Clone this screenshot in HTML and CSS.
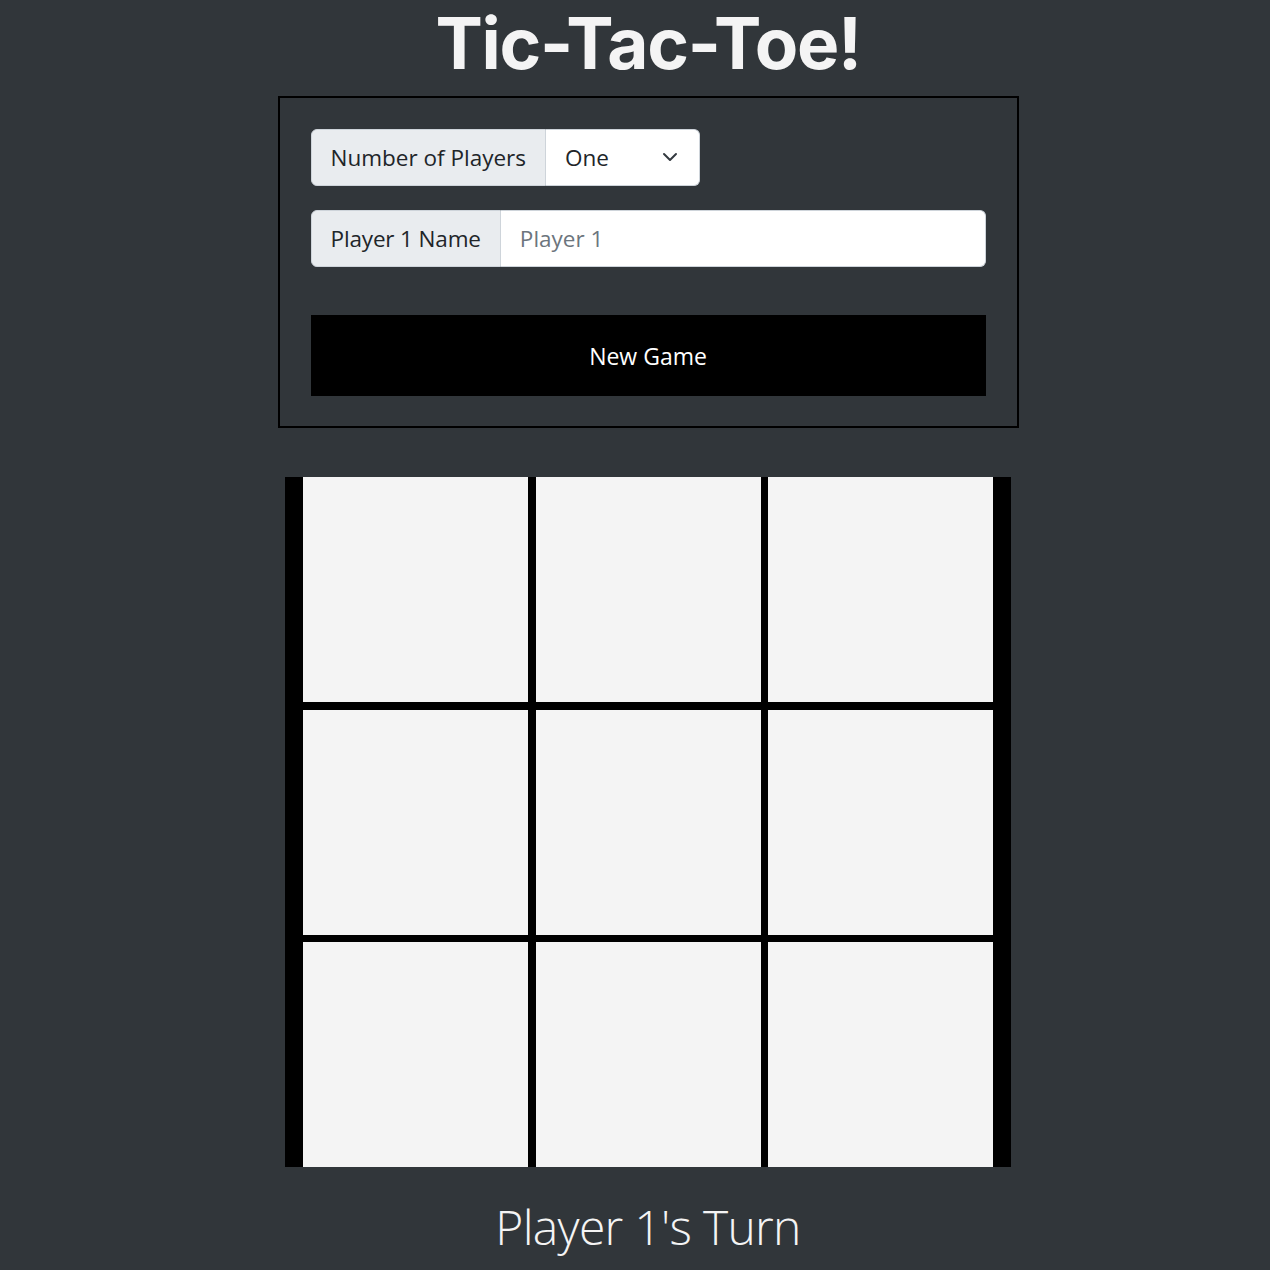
FILE: index.html
```html
<!DOCTYPE html>
<html lang="en">
<head>
<meta charset="utf-8">
<title>Tic-Tac-Toe!</title>
<link rel="stylesheet" href="styles.css">
</head>
<body>
<div class="page">
  <h1 class="title">Tic-Tac-Toe!</h1>
  <form class="setup">
    <div class="group group-players">
      <span class="addon">Number of Players</span>
      <div class="select-wrap">
        <select class="select">
          <option>One</option>
          <option>Two</option>
        </select>
        <svg class="chevron" viewBox="0 0 16 16" width="16" height="16" aria-hidden="true"><path d="M2 5l6 6 6-6" fill="none" stroke="#343a40" stroke-width="2" stroke-linecap="round" stroke-linejoin="round"/></svg>
      </div>
    </div>
    <div class="group group-name">
      <span class="addon">Player 1 Name</span>
      <input class="field" type="text" placeholder="Player 1">
    </div>
    <button type="button" class="new-game">New Game</button>
  </form>
  <div class="board">
    <div class="cell"></div><div class="cell"></div><div class="cell"></div>
    <div class="cell"></div><div class="cell"></div><div class="cell"></div>
    <div class="cell"></div><div class="cell"></div><div class="cell"></div>
  </div>
  <p class="turn">Player 1's Turn</p>
</div>
</body>
</html>
```

FILE: styles.css
```css
* { box-sizing: border-box; }

html, body {
  margin: 0;
  background: #31363a;
}

body {
  font-family: "Open Sans", "Noto Sans", sans-serif;
  color: #212529;
  overflow: hidden;
}

.page {
  display: flex;
  flex-direction: column;
  align-items: center;
  padding-left: 26px;
}

.title {
  margin: 0;
  font-family: "Inter", sans-serif;
  font-weight: 700;
  font-size: 71px;
  letter-spacing: -1.3px;
  line-height: normal;
  color: #f4f4f4;
}

.setup {
  margin-top: 10px;
  width: 741px;
  border: 2px solid #000;
  padding: 31px 31px 30px;
  display: flex;
  flex-direction: column;
  align-items: flex-start;
}

.group {
  display: flex;
  height: 57px;
  font-size: 22.5px;
}

.group-name {
  margin-top: 24px;
  width: 100%;
}

.group-name .addon {
  letter-spacing: -0.15px;
}

.addon {
  display: flex;
  align-items: center;
  padding: 0 19px;
  background: #e9ecef;
  border: 1px solid #ced4da;
  border-radius: 6px 0 0 6px;
  color: #212529;
  white-space: nowrap;
}

.select-wrap {
  position: relative;
  width: 154px;
}

.select {
  appearance: none;
  -webkit-appearance: none;
  width: 100%;
  height: 100%;
  margin: 0;
  padding: 0 19px;
  font: inherit;
  color: #212529;
  background: #fff;
  border: 1px solid #ced4da;
  border-left: 0;
  border-radius: 0 6px 6px 0;
  outline: none;
}

.chevron {
  position: absolute;
  right: 22px;
  top: 50%;
  margin-top: -9px;
  pointer-events: none;
}

.field {
  flex: 1;
  margin: 0;
  padding: 0 19px;
  font: inherit;
  color: #212529;
  background: #fff;
  border: 1px solid #ced4da;
  border-left: 0;
  border-radius: 0 6px 6px 0;
  outline: none;
}

.field::placeholder {
  color: #6c757d;
}

.new-game {
  margin-top: 48px;
  width: 100%;
  height: 81px;
  border: 0;
  background: #000;
  color: #fff;
  font-family: inherit;
  font-size: 23px;
  cursor: pointer;
}

.board {
  margin-top: 49px;
  display: grid;
  grid-template-columns: repeat(3, 225px);
  grid-template-rows: repeat(3, 225px);
  gap: 7.5px;
  background: #000;
  border-left: 18px solid #000;
  border-right: 18px solid #000;
}

.cell {
  background: #f4f4f4;
}

.turn {
  margin: 31px 0 0;
  font-size: 48px;
  font-weight: 300;
  letter-spacing: -0.7px;
  line-height: 1.2;
  color: #f4f4f4;
}
```
